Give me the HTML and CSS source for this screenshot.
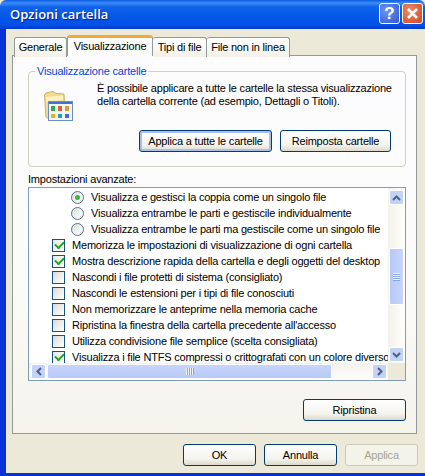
FILE: index.html
```html
<!DOCTYPE html>
<html lang="it">
<head>
    <meta charset="UTF-8">
    <title>Opzioni cartella</title>
    <link rel="stylesheet" href="styles.css">
</head>
<body>
    <div class="window">
        <div class="titlebar">
            <span class="title">Opzioni cartella</span>
            <button class="title-btn help" type="button">?</button>
            <button class="title-btn close" type="button">
                <svg width="13" height="13" viewBox="0 0 13 13"><path d="M2 2 L11 11 M11 2 L2 11" stroke="#fff" stroke-width="2.6" fill="none"/></svg>
            </button>
        </div>
        <div class="window-body">
            <div class="tabs">
                <div class="tab tab-first">Generale</div>
                <div class="tab tab-active">Visualizzazione</div>
                <div class="tab tab-third">Tipi di file</div>
                <div class="tab tab-fourth">File non in linea</div>
            </div>
            <div class="panel">
                <fieldset class="group">
                    <legend>Visualizzazione cartelle</legend>
                    <div class="group-top">
                        <svg class="folder-icon" width="30" height="31" viewBox="0 0 30 31">
                            <path d="M1.5 5 L3 3 L10 1.5 L13 3.5 L21 4 L22 27 L7 29.5 L3 27 Z" fill="#f2dc92" stroke="#cdb066"/>
                            <path d="M3 7 L20 5.5 L20 10 L3 12 Z" fill="#fcf1c0"/>
                            <rect x="5.5" y="11.5" width="24" height="19" fill="#f4f4f0" stroke="#6a8cc0"/>
                            <rect x="6" y="12" width="23" height="2" fill="#3f74d0"/>
                            <rect x="8" y="16" width="4" height="5" fill="#2fa84f"/>
                            <rect x="15" y="16" width="4" height="5" fill="#d8603c"/>
                            <rect x="22" y="16" width="4" height="5" fill="#d89a3c"/>
                            <rect x="8" y="24" width="4" height="4" fill="#e8b020"/>
                            <rect x="15" y="24" width="4" height="4" fill="#20a0a8"/>
                            <rect x="22" y="24" width="4" height="4" fill="#3c6cd8"/>
                        </svg>
                        <p class="group-text">È possibile applicare a tutte le cartelle la stessa visualizzazione<br>della cartella corrente (ad esempio, Dettagli o Titoli).</p>
                    </div>
                    <div class="group-buttons">
                        <button class="btn btn-default btn-apply-all" type="button">Applica a tutte le cartelle</button>
                        <button class="btn btn-reset" type="button">Reimposta cartelle</button>
                    </div>
                </fieldset>

                <div class="list-label">Impostazioni avanzate:</div>
                <div class="listbox">
                    <div class="rows">
                        <div class="row row-radio"><span class="radio radio-on"></span>Visualizza e gestisci la coppia come un singolo file</div>
                        <div class="row row-radio"><span class="radio"></span>Visualizza entrambe le parti e gestiscile individualmente</div>
                        <div class="row row-radio"><span class="radio"></span>Visualizza entrambe le parti ma gestiscile come un singolo file</div>
                        <div class="row"><span class="check check-on"></span>Memorizza le impostazioni di visualizzazione di ogni cartella</div>
                        <div class="row"><span class="check check-on"></span>Mostra descrizione rapida della cartella e degli oggetti del desktop</div>
                        <div class="row"><span class="check"></span>Nascondi i file protetti di sistema (consigliato)</div>
                        <div class="row"><span class="check"></span>Nascondi le estensioni per i tipi di file conosciuti</div>
                        <div class="row"><span class="check"></span>Non memorizzare le anteprime nella memoria cache</div>
                        <div class="row"><span class="check"></span>Ripristina la finestra della cartella precedente all'accesso</div>
                        <div class="row"><span class="check"></span>Utilizza condivisione file semplice (scelta consigliata)</div>
                        <div class="row"><span class="check check-on"></span>Visualizza i file NTFS compressi o crittografati con un colore diverso</div>
                    </div>
                    <div class="vscroll">
                        <div class="sb-btn"><svg width="9" height="6" viewBox="0 0 9 6"><path d="M1 5 L4.5 1.5 L8 5" stroke="#4d6185" stroke-width="2" fill="none"/></svg></div>
                        <div class="sb-thumb sb-thumb-v"><span class="grip-v"></span></div>
                        <div class="sb-btn sb-btn-down"><svg width="9" height="6" viewBox="0 0 9 6"><path d="M1 1 L4.5 4.5 L8 1" stroke="#4d6185" stroke-width="2" fill="none"/></svg></div>
                    </div>
                    <div class="hscroll">
                        <div class="sb-btn"><svg width="6" height="9" viewBox="0 0 6 9"><path d="M5 1 L1.5 4.5 L5 8" stroke="#4d6185" stroke-width="2" fill="none"/></svg></div>
                        <div class="sb-thumb sb-thumb-h"><span class="grip-h"></span></div>
                        <div class="sb-btn sb-btn-right"><svg width="6" height="9" viewBox="0 0 6 9"><path d="M1 1 L4.5 4.5 L1 8" stroke="#4d6185" stroke-width="2" fill="none"/></svg></div>
                    </div>
                    <div class="corner"></div>
                </div>
                <div class="restore-row">
                    <button class="btn btn-restore" type="button">Ripristina</button>
                </div>
            </div>
            <div class="footer">
                <button class="btn btn-footer" type="button">OK</button>
                <button class="btn btn-footer" type="button">Annulla</button>
                <button class="btn btn-footer btn-disabled" type="button">Applica</button>
            </div>
        </div>
    </div>
</body>
</html>
```

FILE: styles.css
```css
* {
    box-sizing: border-box;
}
body {
    margin: 0;
    background: #ece9d8;
    font-family: "Liberation Sans", Arial, sans-serif;
    font-size: 11px;
    letter-spacing: -0.2px;
    color: #000;
}
.window {
    width: 425px;
    height: 476px;
    display: flex;
    flex-direction: column;
    overflow: hidden;
}

/* title bar */
.titlebar {
    height: 29px;
    flex: none;
    display: flex;
    align-items: center;
    padding: 0 2px 2px 10px;
    gap: 2px;
    background: linear-gradient(to bottom, #0a5ae0 0, #3c8cf8 3px, #0f62ea 7px, #0255e6 20px, #0550ea 25px, #0038c8 29px);
    border-radius: 6px 6px 0 0;
}
.title {
    flex: 1;
    color: #fff;
    font-family: "Open Sans", sans-serif;
    font-weight: 600;
    font-size: 13px;
    letter-spacing: 0;
    text-shadow: 1px 1px 1px #0f1f80;
}
.title-btn {
    width: 21px;
    height: 21px;
    padding: 0;
    border: 1px solid #fff;
    border-radius: 3px;
    display: flex;
    align-items: center;
    justify-content: center;
    color: #fff;
}
.help {
    background: radial-gradient(circle at 35% 35%, #6f96ee, #2c56d8);
    font-family: "Liberation Sans", sans-serif;
    font-size: 17px;
    font-weight: bold;
}
.close {
    background: radial-gradient(circle at 35% 35%, #ec8a6a, #d4431c);
}

/* dialog body */
.window-body {
    flex: 1;
    border-left: 6px solid #0831d9;
    border-bottom: 3px solid #0831d9;
    padding: 7px 0 0 6px;
    background: #ece9d8;
}
.tabs {
    display: flex;
    height: 20px;
    padding-left: 2px;
    position: relative;
    z-index: 1;
    margin-bottom: -1px;
}
.tab {
    height: 20px;
    margin-top: 1px;
    border: 1px solid #919b9c;
    border-bottom: none;
    border-left: none;
    border-radius: 3px 3px 0 0;
    background: linear-gradient(to bottom, #fff, #f3f1e8);
    text-align: center;
    line-height: 18px;
    white-space: nowrap;
}
.tab-first {
    width: 53px;
    border-left: 1px solid #919b9c;
}
.tab-active {
    width: 86px;
    height: 21px;
    margin-top: -1px;
    background: #fcfcfa;
    border-top: 3px solid #f2a93b;
    border-left: 1px solid #919b9c;
    border-radius: 3px 3px 0 0;
    line-height: 16px;
}
.tab-third {
    width: 54px;
}
.tab-fourth {
    width: 83px;
}
.panel {
    width: 405px;
    height: 379px;
    border: 1px solid #919b9c;
    border-right-color: #8f9a9b;
    background: linear-gradient(to bottom, #fcfcfe 0, #fbfbf9 60%, #f4f3ec 100%);
    padding: 8px 10px 0 15px;
}

/* group box */
.group {
    margin: 0;
    padding: 0;
    width: 378px;
    min-width: 0;
    height: 103px;
    border: 1px solid #d0d0bf;
    border-radius: 4px;
}
.group legend {
    margin-left: 6px;
    padding: 0 2px;
    color: #0046d5;
    line-height: 14px;
}
.group-top {
    display: flex;
    padding: 3px 0 0 14px;
    height: 52px;
}
.folder-icon {
    margin-top: 9px;
    flex: none;
}
.group-text {
    margin: 0 0 0 24px;
    line-height: 13px;
    padding-top: 1px;
    white-space: nowrap;
}
.group-buttons {
    display: flex;
    gap: 8px;
    padding-left: 110px;
}
.btn {
    height: 22px;
    padding: 0;
    border: 1px solid #003c74;
    border-radius: 3px;
    background: linear-gradient(to bottom, #fff 0, #f4f3ee 70%, #dcd8ca 100%);
    font: inherit;
    letter-spacing: inherit;
    color: #000;
    white-space: nowrap;
}
.btn-default {
    box-shadow: inset 0 0 0 2px #a8c0ea;
}
.btn-apply-all {
    width: 133px;
}
.btn-reset {
    width: 111px;
}
.btn-restore {
    width: 103px;
}
.btn-footer {
    width: 73px;
}
.btn-disabled {
    border-color: #cdcab8;
    background: #f4f3ea;
    color: #a5a294;
}

/* list */
.list-label {
    margin-top: 5px;
    height: 15px;
    line-height: 14px;
}
.listbox {
    width: 378px;
    height: 194px;
    border: 1px solid #7f9db9;
    background: #fff;
    display: grid;
    grid-template-columns: 1fr 17px;
    grid-template-rows: 1fr 17px;
}
.rows {
    padding-top: 1px;
    overflow: hidden;
    min-width: 0;
    min-height: 0;
}
.row {
    height: 16px;
    line-height: 16px;
    white-space: nowrap;
    display: flex;
    align-items: center;
    padding-left: 23px;
}
.row-radio {
    padding-left: 42px;
}
.check {
    flex: none;
    width: 13px;
    height: 13px;
    margin-right: 7px;
    border: 1px solid #1c5180;
    background: linear-gradient(135deg, #dcdcd7, #fff);
    position: relative;
}
.check-on {
    background: linear-gradient(135deg, #e8e8e2, #fff);
}
.check-on::after {
    content: "";
    position: absolute;
    left: 2px;
    top: 1px;
    width: 7px;
    height: 4px;
    border-left: 2px solid #21a121;
    border-bottom: 2px solid #21a121;
    transform: rotate(-45deg);
}
.radio {
    flex: none;
    width: 13px;
    height: 13px;
    margin-right: 7px;
    border: 1px solid #5a7590;
    border-radius: 50%;
    background: linear-gradient(135deg, #dcdcd7, #fff);
    position: relative;
}
.radio-on::after {
    content: "";
    position: absolute;
    left: 3px;
    top: 3px;
    width: 5px;
    height: 5px;
    border-radius: 50%;
    background: #3cb83c;
}

/* scrollbars */
.vscroll {
    display: flex;
    flex-direction: column;
    align-items: center;
    padding-top: 2px;
    background: linear-gradient(to right, #f3f1ec, #fefefb);
}
.hscroll {
    display: flex;
    align-items: center;
    gap: 1px;
    padding-left: 2px;
    background: linear-gradient(to bottom, #f3f1ec, #fefefb);
}
.sb-btn {
    flex: none;
    width: 15px;
    height: 15px;
    border: 1px solid #fff;
    border-radius: 2px;
    background: #c3d3f8;
    display: flex;
    align-items: center;
    justify-content: center;
}
.sb-btn-down {
    margin-top: auto;
    margin-bottom: 1px;
}
.sb-btn-right {
    margin-left: auto;
    margin-right: 1px;
}
.sb-thumb {
    display: flex;
    align-items: center;
    justify-content: center;
    border: 1px solid #fff;
    border-radius: 2px;
}
.sb-thumb-v {
    width: 15px;
    height: 57px;
    margin-top: 43px;
    background: linear-gradient(to right, #b7c9f8, #c7d5fb);
}
.sb-thumb-h {
    flex: none;
    width: 285px;
    height: 15px;
    background: linear-gradient(to bottom, #c7d5fb, #b7c9f8);
}
.grip-v {
    width: 7px;
    height: 8px;
    background: repeating-linear-gradient(to bottom, #eef3fe 0 1px, #8ca6dc 1px 2px);
}
.grip-h {
    width: 8px;
    height: 7px;
    background: repeating-linear-gradient(to right, #eef3fe 0 1px, #8ca6dc 1px 2px);
}
.corner {
    background: #ece9d8;
}
.restore-row {
    display: flex;
    justify-content: flex-end;
    width: 378px;
    margin-top: 18px;
}
.footer {
    display: flex;
    justify-content: flex-end;
    gap: 8px;
    padding-right: 7px;
    margin-top: 10px;
}
```
